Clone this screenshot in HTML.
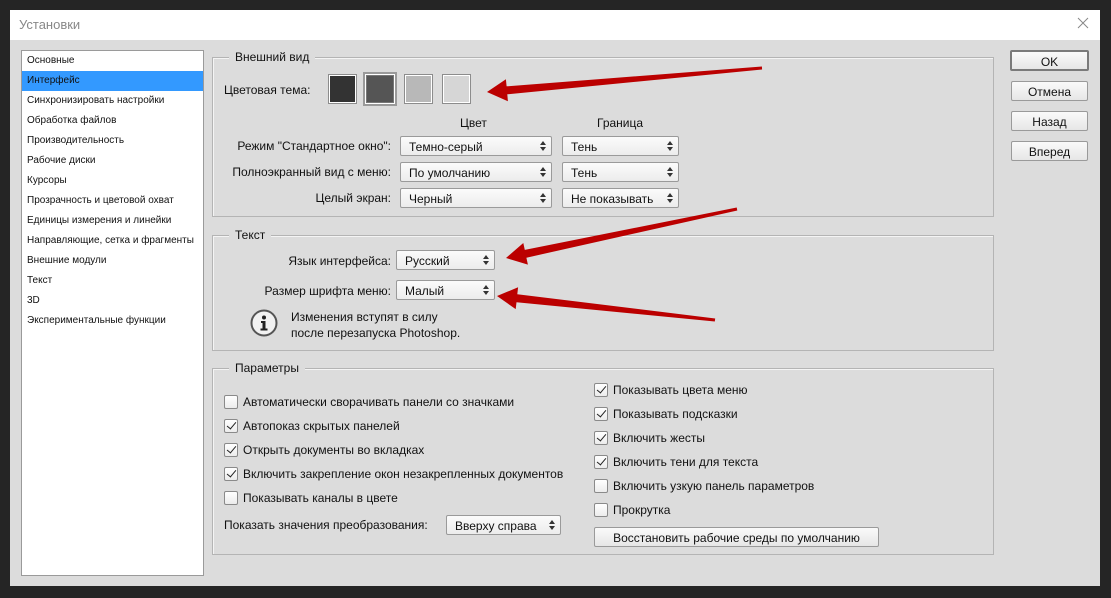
<!DOCTYPE html>
<html><head><meta charset="utf-8"><style>
*{margin:0;padding:0;box-sizing:border-box}
body{width:1111px;height:598px;background:#252525;position:relative;overflow:hidden;font-family:"Liberation Sans",sans-serif;color:#111}
.a{position:absolute}
#win{left:10px;top:10px;width:1090px;height:576px;background:#dcdcdc}
#title{left:10px;top:10px;width:1090px;height:30px;background:#fff;color:#888;font-size:13px;padding:7px 0 0 9px}
#list{left:21px;top:50px;width:183px;height:526px;background:#fff;border:1px solid #9a9a9a}
.li{position:absolute;left:0;width:181px;height:20px;font-size:10px;padding:4px 0 0 5px;white-space:nowrap}
.grp{border:1px solid #b4b4b4;box-shadow:inset 1px 1px 0 #f4f4f4}
.gl{position:absolute;background:#dcdcdc;font-size:12px;padding:0 6px}
.t{position:absolute;font-size:12px;white-space:nowrap}
.r{text-align:right}
.dd{position:absolute;height:20px;background:linear-gradient(#fbfbfb,#ececec);border:1px solid #9a9a9a;border-radius:2px;font-size:12px;padding:3px 0 0 8px;white-space:nowrap}
.dd:before,.dd:after{content:"";position:absolute;right:5px;width:0;height:0;border-left:3px solid transparent;border-right:3px solid transparent}
.dd:before{top:4px;border-bottom:4px solid #333}
.dd:after{top:10px;border-top:4px solid #333}
.cb{position:absolute;width:14px;height:14px;border:1px solid #8a8a8a;border-radius:2px;background:linear-gradient(#fff,#ececec)}
.cb.c:after{content:"";position:absolute;left:4px;top:0px;width:4px;height:8px;border:solid #222;border-width:0 1.5px 1.5px 0;transform:rotate(40deg)}
.btn{position:absolute;height:20px;background:linear-gradient(#fafafa,#e6e6e6);border:1px solid #9a9a9a;border-radius:2px;font-size:12px;text-align:center;padding-top:3px}
.sw{position:absolute;border:1px solid #fff;outline:1px solid #8c8c8c}
</style></head><body>
<div class="a" id="win"></div>
<div class="a" id="title">Установки</div>
<svg class="a" style="left:1077px;top:17px" width="12" height="12"><path d="M1 1L11 11M11 1L1 11" stroke="#888" stroke-width="1"/></svg>

<div class="a" id="list">
<div class="li" style="top:0">Основные</div>
<div class="li" style="top:20px;background:#3399ff">Интерфейс</div>
<div class="li" style="top:40px">Синхронизировать настройки</div>
<div class="li" style="top:60px">Обработка файлов</div>
<div class="li" style="top:80px">Производительность</div>
<div class="li" style="top:100px">Рабочие диски</div>
<div class="li" style="top:120px">Курсоры</div>
<div class="li" style="top:140px">Прозрачность и цветовой охват</div>
<div class="li" style="top:160px">Единицы измерения и линейки</div>
<div class="li" style="top:180px">Направляющие, сетка и фрагменты</div>
<div class="li" style="top:200px">Внешние модули</div>
<div class="li" style="top:220px">Текст</div>
<div class="li" style="top:240px">3D</div>
<div class="li" style="top:260px">Экспериментальные функции</div>
</div>

<div class="a grp" style="left:212px;top:57px;width:782px;height:160px"></div>
<div class="gl" style="left:229px;top:50px">Внешний вид</div>
<div class="t" style="left:224px;top:83px">Цветовая тема:</div>
<div class="sw" style="left:329px;top:75px;width:27px;height:28px;background:#333"></div>
<div class="a" style="left:363px;top:72px;width:34px;height:34px;border:2px solid #9a9a9a;background:#fff;padding:1px"><div style="width:100%;height:100%;background:#555;border:1px solid #777"></div></div>
<div class="sw" style="left:405px;top:75px;width:27px;height:28px;background:#b8b8b8"></div>
<div class="sw" style="left:443px;top:75px;width:27px;height:28px;background:#d6d6d6"></div>
<div class="t" style="left:460px;top:116px">Цвет</div>
<div class="t" style="left:597px;top:116px">Граница</div>
<div class="t r" style="left:200px;width:191px;top:139px">Режим "Стандартное окно":</div>
<div class="t r" style="left:200px;width:191px;top:165px">Полноэкранный вид с меню:</div>
<div class="t r" style="left:200px;width:191px;top:191px">Целый экран:</div>
<div class="dd" style="left:400px;top:136px;width:152px">Темно-серый</div>
<div class="dd" style="left:562px;top:136px;width:117px">Тень</div>
<div class="dd" style="left:400px;top:162px;width:152px">По умолчанию</div>
<div class="dd" style="left:562px;top:162px;width:117px">Тень</div>
<div class="dd" style="left:400px;top:188px;width:152px">Черный</div>
<div class="dd" style="left:562px;top:188px;width:117px">Не показывать</div>

<div class="a grp" style="left:212px;top:235px;width:782px;height:116px"></div>
<div class="gl" style="left:229px;top:228px">Текст</div>
<div class="t r" style="left:200px;width:191px;top:254px">Язык интерфейса:</div>
<div class="t r" style="left:200px;width:191px;top:284px">Размер шрифта меню:</div>
<div class="dd" style="left:396px;top:250px;width:99px">Русский</div>
<div class="dd" style="left:396px;top:280px;width:99px">Малый</div>
<svg class="a" style="left:250px;top:309px" width="28" height="28"><circle cx="14" cy="14" r="12.5" fill="#f2f2f2" stroke="#555" stroke-width="2"/><circle cx="14" cy="8.5" r="2" fill="#222"/><path d="M11 12h4.5v7.5h2v2h-7v-2h2v-5.5h-1.5z" fill="#222"/></svg>
<div class="t" style="left:291px;top:309px;line-height:16px">Изменения вступят в силу<br>после перезапуска Photoshop.</div>

<div class="a grp" style="left:212px;top:368px;width:782px;height:187px"></div>
<div class="gl" style="left:229px;top:361px">Параметры</div>
<div class="cb" style="left:224px;top:395px"></div><div class="t" style="left:243px;top:395px">Автоматически сворачивать панели со значками</div>
<div class="cb c" style="left:224px;top:419px"></div><div class="t" style="left:243px;top:419px">Автопоказ скрытых панелей</div>
<div class="cb c" style="left:224px;top:443px"></div><div class="t" style="left:243px;top:443px">Открыть документы во вкладках</div>
<div class="cb c" style="left:224px;top:467px"></div><div class="t" style="left:243px;top:467px">Включить закрепление окон незакрепленных документов</div>
<div class="cb" style="left:224px;top:491px"></div><div class="t" style="left:243px;top:491px">Показывать каналы в цвете</div>
<div class="t" style="left:224px;top:518px">Показать значения преобразования:</div>
<div class="dd" style="left:446px;top:515px;width:115px">Вверху справа</div>

<div class="cb c" style="left:594px;top:383px"></div><div class="t" style="left:613px;top:383px">Показывать цвета меню</div>
<div class="cb c" style="left:594px;top:407px"></div><div class="t" style="left:613px;top:407px">Показывать подсказки</div>
<div class="cb c" style="left:594px;top:431px"></div><div class="t" style="left:613px;top:431px">Включить жесты</div>
<div class="cb c" style="left:594px;top:455px"></div><div class="t" style="left:613px;top:455px">Включить тени для текста</div>
<div class="cb" style="left:594px;top:479px"></div><div class="t" style="left:613px;top:479px">Включить узкую панель параметров</div>
<div class="cb" style="left:594px;top:503px"></div><div class="t" style="left:613px;top:503px">Прокрутка</div>
<div class="btn" style="left:594px;top:527px;width:285px">Восстановить рабочие среды по умолчанию</div>

<div class="btn" style="left:1010px;top:50px;width:79px;height:21px;border:2px solid #7a7a7a">OK</div>
<div class="btn" style="left:1011px;top:81px;width:77px">Отмена</div>
<div class="btn" style="left:1011px;top:111px;width:77px">Назад</div>
<div class="btn" style="left:1011px;top:141px;width:77px">Вперед</div>

<svg class="a" style="left:0;top:0" width="1111" height="598">
<g fill="#bb0000">
<polygon points="487,92 505.9,79.3 506.6,86.3 761.9,66.5 762.1,69.5 507.3,94.3 507.9,101.3"/>
<polygon points="506,258 523.3,243 524.8,249.9 736.7,207.5 737.3,210.5 526.4,257.7 527.9,264.6"/>
<polygon points="497,296 518.1,287.3 517.3,294.2 715.2,318.5 714.8,321.5 516.5,302.2 515.7,309.1"/>
</g></svg>
</body></html>
